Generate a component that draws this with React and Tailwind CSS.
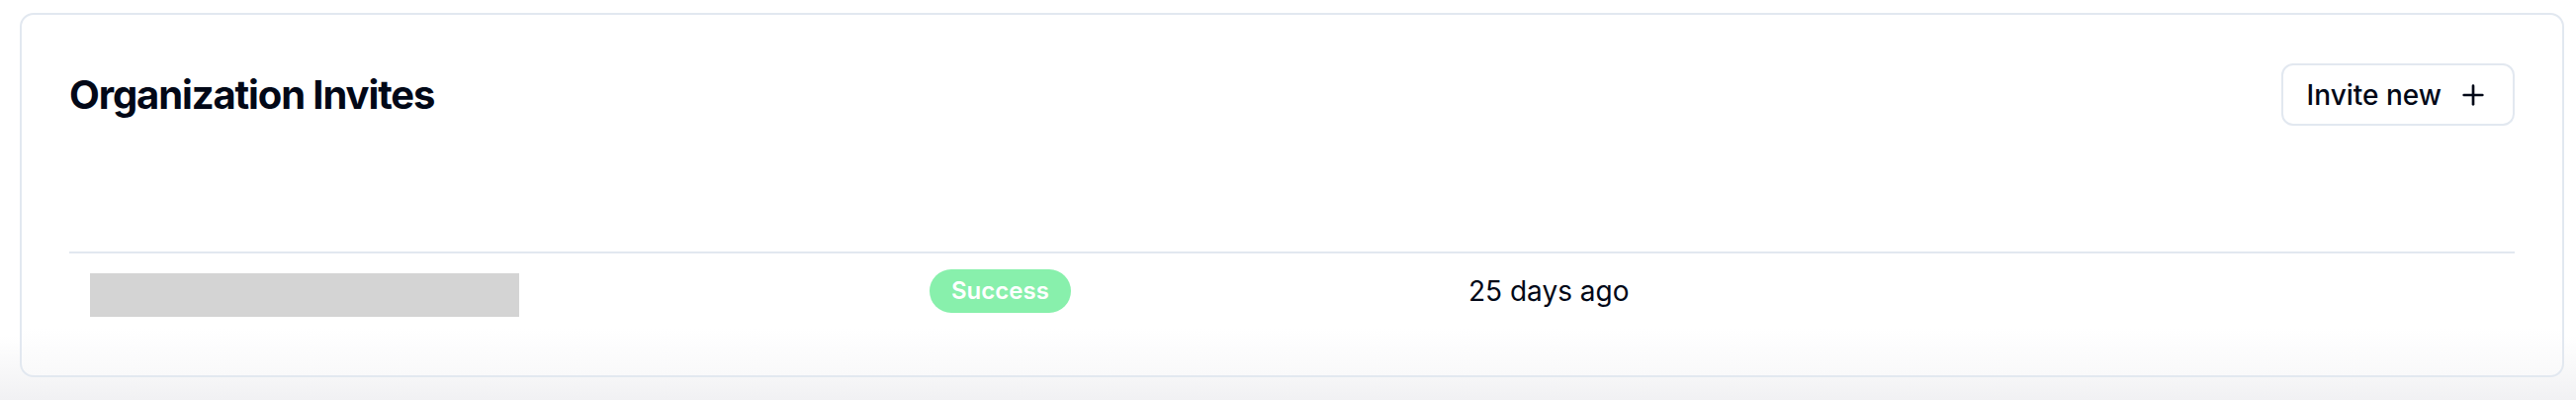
import React from "react";
import { Plus } from "lucide-react";

export default function App() {
  return (
    <div
      className="w-[2605px] h-[404px] bg-gradient-to-b from-white from-[84%] to-[#f1f1f3] pl-[20px] pr-[12px] pt-[13px]"
      style={{ fontFamily: "Inter, 'Noto Sans', sans-serif" }}
    >
      <div className="border-2 border-[#e2e8f0] rounded-[14px] bg-gradient-to-b from-white from-[87%] to-[#f9f9fa] px-[48px] pt-[49px] pb-[47px]">
        <div className="flex items-center justify-between h-[63px]">
          <h2 className="text-[40px] leading-none font-bold tracking-[-0.028em] text-[#020817]">
            Organization Invites
          </h2>
          <button className="flex items-center gap-[16px] h-[63px] px-[24px] border-2 border-[#e2e8f0] rounded-[12px] bg-white text-[28px] font-medium text-[#020817]">
            <span>Invite new</span>
            <Plus size={32} strokeWidth={2} />
          </button>
        </div>
        <div className="h-[129px] border-b-2 border-[#e2e8f0]" />
        <div className="flex items-center h-[76px]">
          <div className="w-[849px] pl-[21px]">
            <div className="w-[434px] h-[44px] mt-[8px] bg-[#d4d4d4]" />
          </div>
          <div className="w-[546px] pl-[21px]">
            <span className="inline-flex items-center h-[44px] px-[22px] rounded-full bg-[#88f0ac] text-white text-[24px] font-semibold">
              Success
            </span>
          </div>
          <div className="flex-1 pl-[20px] text-[28px] text-[#020817]">25 days ago</div>
        </div>
      </div>
    </div>
  );
}
